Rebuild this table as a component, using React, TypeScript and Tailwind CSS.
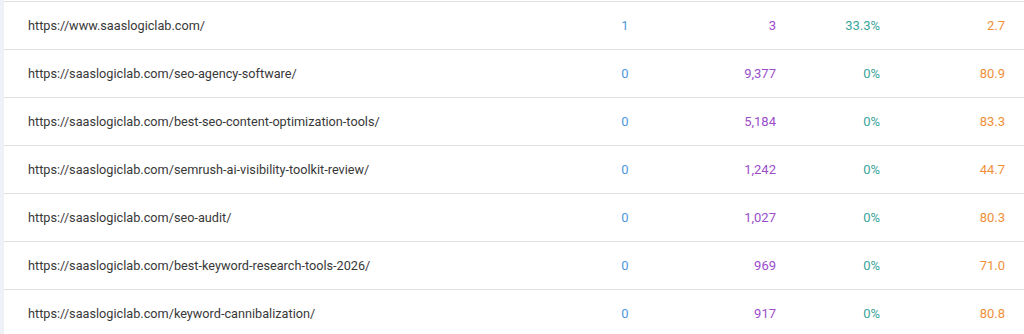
import React from "react";

const rows = [
  { url: "https://www.saaslogiclab.com/", a: "1", b: "3", c: "33.3%", d: "2.7" },
  { url: "https://saaslogiclab.com/seo-agency-software/", a: "0", b: "9,377", c: "0%", d: "80.9" },
  { url: "https://saaslogiclab.com/best-seo-content-optimization-tools/", a: "0", b: "5,184", c: "0%", d: "83.3" },
  { url: "https://saaslogiclab.com/semrush-ai-visibility-toolkit-review/", a: "0", b: "1,242", c: "0%", d: "44.7" },
  { url: "https://saaslogiclab.com/seo-audit/", a: "0", b: "1,027", c: "0%", d: "80.3" },
  { url: "https://saaslogiclab.com/best-keyword-research-tools-2026/", a: "0", b: "969", c: "0%", d: "71.0" },
  { url: "https://saaslogiclab.com/keyword-cannibalization/", a: "0", b: "917", c: "0%", d: "80.8" },
];

export default function App() {
  return (
    <div
      className="flex h-[334px] w-[1024px] overflow-hidden bg-white"
      style={{ fontFamily: "Roboto, 'Liberation Sans', sans-serif" }}
    >
      <div className="w-[4px] shrink-0 bg-[#eef2f8]" />
      <div className="flex-1 pt-[1px]">
        {rows.map((r, i) => (
          <div
            key={i}
            className="flex h-[48px] items-center border-t border-[#e0e0e0] text-[13px]"
          >
            <div className="w-[568px] shrink-0 pl-6 text-[12.7px] text-[#383838]">{r.url}</div>
            <div className="w-[106px] shrink-0 text-center text-[#4f97df]">{r.a}</div>
            <div className="w-[98px] shrink-0 text-right text-[#9b4dca]">{r.b}</div>
            <div className="w-[104px] shrink-0 text-right text-[#3aa59a]">{r.c}</div>
            <div className="w-[125px] shrink-0 text-right text-[#f0903a]">{r.d}</div>
          </div>
        ))}
      </div>
    </div>
  );
}
